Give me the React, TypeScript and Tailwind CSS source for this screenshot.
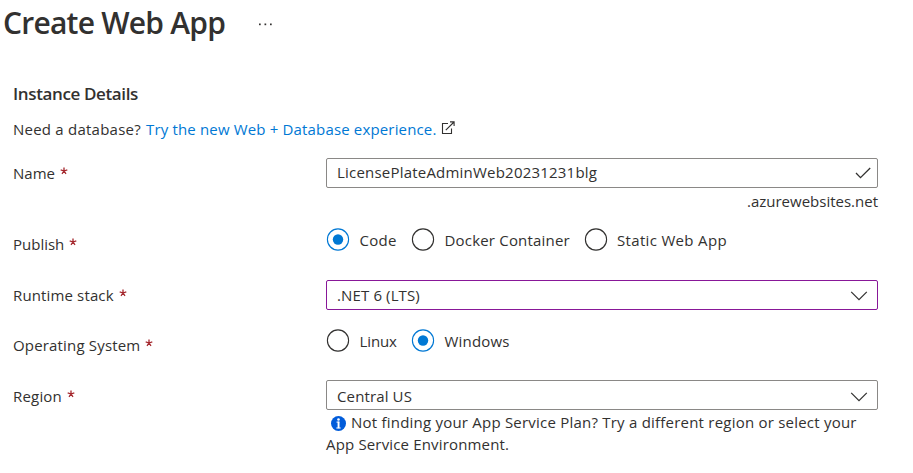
import type { ReactNode } from "react";

function Label({ children, className }: { children: string; className: string }) {
  return (
    <div className="flex w-[313px] shrink-0 gap-[5px] leading-5">
      <span className={className}>{children}</span>
      <svg width="8" height="8" viewBox="0 0 8 8" className="mt-1" stroke="#a4262c" strokeWidth="1.3" role="img" aria-label="required">
        <path d="M4 .4v3.6M4 4L.7 2.9M4 4l3.3-1.1M4 4L2 6.9M4 4l2 2.9" fill="none" />
      </svg>
    </div>
  );
}

function Radio({ checked = false, width, children, className }: { checked?: boolean; width: string; children: string; className: string }) {
  return (
    <div className={"flex " + width}>
      <svg width="24" height="24" viewBox="0 0 24 24" className="shrink-0">
        <circle cx="12" cy="11.5" r="10.6" fill="#fff" stroke={checked ? "#0078d4" : "#323130"} strokeWidth="1.1" />
        {checked && <circle cx="12" cy="11.5" r="5.2" fill="#0078d4" />}
      </svg>
      <span className={"ml-[9.5px] mt-[2px] whitespace-nowrap leading-5 " + className}>{children}</span>
    </div>
  );
}

function Field({ children, className }: { children: ReactNode; className: string }) {
  return <div className={"flex h-[30px] w-[552px] justify-between rounded-[2px] border pl-[10px] leading-5 " + className}>{children}</div>;
}

function Chevron() {
  return (
    <svg width="18" height="10" viewBox="0 0 18 10" className="mr-[9px] mt-[6px]" fill="none" stroke="#323130" strokeWidth="1.2">
      <path d="M1.2 .8L9 8.6L16.8 .8" />
    </svg>
  );
}

export default function App() {
  return (
    <main className="h-[473px] w-[913px] overflow-hidden bg-white font-['Open_Sans','Noto_Sans',sans-serif] text-[15px] text-[#323130]">
      <header className="flex h-[83px] pl-[3px]">
        <h1 className="mt-[3px] w-[255px] whitespace-nowrap text-[30px] font-semibold leading-10 tracking-[-0.77px]">Create Web App</h1>
        <svg width="15" height="3" viewBox="0 0 15 3" className="mt-[23px]" fill="#323130">
          <rect x="1" y="0.5" width="1.7" height="1.7" />
          <rect x="6.5" y="0.5" width="1.7" height="1.7" />
          <rect x="12" y="0.5" width="1.7" height="1.7" />
        </svg>
      </header>

      <section className="pl-[13px]">
        <h2 className="h-9 text-[17px] font-semibold leading-[22px] tracking-[-0.37px]">Instance Details</h2>
        <div className="flex h-[39px] whitespace-nowrap leading-5">
          <span className="w-[133px] tracking-[0.23px]">Need a database?</span>
          <a className="w-[295px] tracking-[0.16px] text-[#0078d4]">Try the new Web + Database experience.</a>
          <svg width="14" height="14" viewBox="0 0 14 14" className="mt-[2px]" fill="none" stroke="#323130" strokeWidth="1.1">
            <path d="M7 2.5H1.5v10h9V7.5M4.8 9.2L13 1M9 .9h4.1V5" />
          </svg>
        </div>

        <div className="flex h-[70px]">
          <div className="pt-[5px]"><Label className="">Name</Label></div>
          <div className="w-[552px]">
            <Field className="border-[#8a8886] pt-[3px]">
              <span className="tracking-[0.21px]">LicensePlateAdminWeb20231231blg</span>
              <svg width="16" height="12" viewBox="0 0 16 12" className="mr-[6px] mt-[5px]" fill="none" stroke="#323130" strokeWidth="1.3">
                <path d="M1 6l4.5 4.6L15.2 1" />
              </svg>
            </Field>
            <div className="mt-[3px] text-right leading-5">.azurewebsites.net</div>
          </div>
        </div>

        <div className="flex h-[52px]">
          <div className="pt-[6px]"><Label className="">Publish</Label></div>
          <Radio checked width="w-[85px]" className="tracking-[0.25px]">Code</Radio>
          <Radio width="w-[172.5px]" className="tracking-[0.19px]">Docker Container</Radio>
          <Radio width="w-[160px]" className="tracking-[0.33px]">Static Web App</Radio>
        </div>

        <div className="flex h-[49px]">
          <div className="pt-[5px]"><Label className="tracking-[0.14px]">Runtime stack</Label></div>
          <Field className="border-[#881798] pt-[4px]">
            <span className="tracking-[0.13px]">.NET 6 (LTS)</span>
            <Chevron />
          </Field>
        </div>

        <div className="flex h-[51px]">
          <div className="pt-[6px]"><Label className="tracking-[0.17px]">Operating System</Label></div>
          <Radio width="w-[85px]" className="tracking-[-0.1px]">Linux</Radio>
          <Radio checked width="w-[172px]" className="tracking-[0.19px]">Windows</Radio>
        </div>

        <div className="flex">
          <div className="pt-[6px]"><Label className="tracking-[0.19px]">Region</Label></div>
          <div className="w-[552px]">
            <Field className="border-[#8a8886] pt-[5px]">
              <span className="tracking-[0.13px]">Central US</span>
              <Chevron />
            </Field>
            <p className="mt-px whitespace-nowrap leading-[22px]">
              <svg width="15" height="15" viewBox="0 0 15 15" className="ml-[5px] mr-[5px] inline-block align-[-3px]">
                <circle cx="7.5" cy="7.5" r="7.5" fill="#015cda" />
                <circle cx="7.5" cy="3.5" r="1.3" fill="#fff" />
                <path d="M5.5 6.1h2.8M5.3 12h4.4" fill="none" stroke="#fff" strokeWidth="1" />
                <path d="M6.6 5.6h1.9v6.6H6.6z" fill="#fff" />
              </svg>
              <span className="tracking-[0.22px]">Not finding your App Service Plan? Try a different region or select your</span>
              <br />
              <span className="tracking-[0.16px]">App Service Environment.</span>
            </p>
          </div>
        </div>
      </section>
    </main>
  );
}
